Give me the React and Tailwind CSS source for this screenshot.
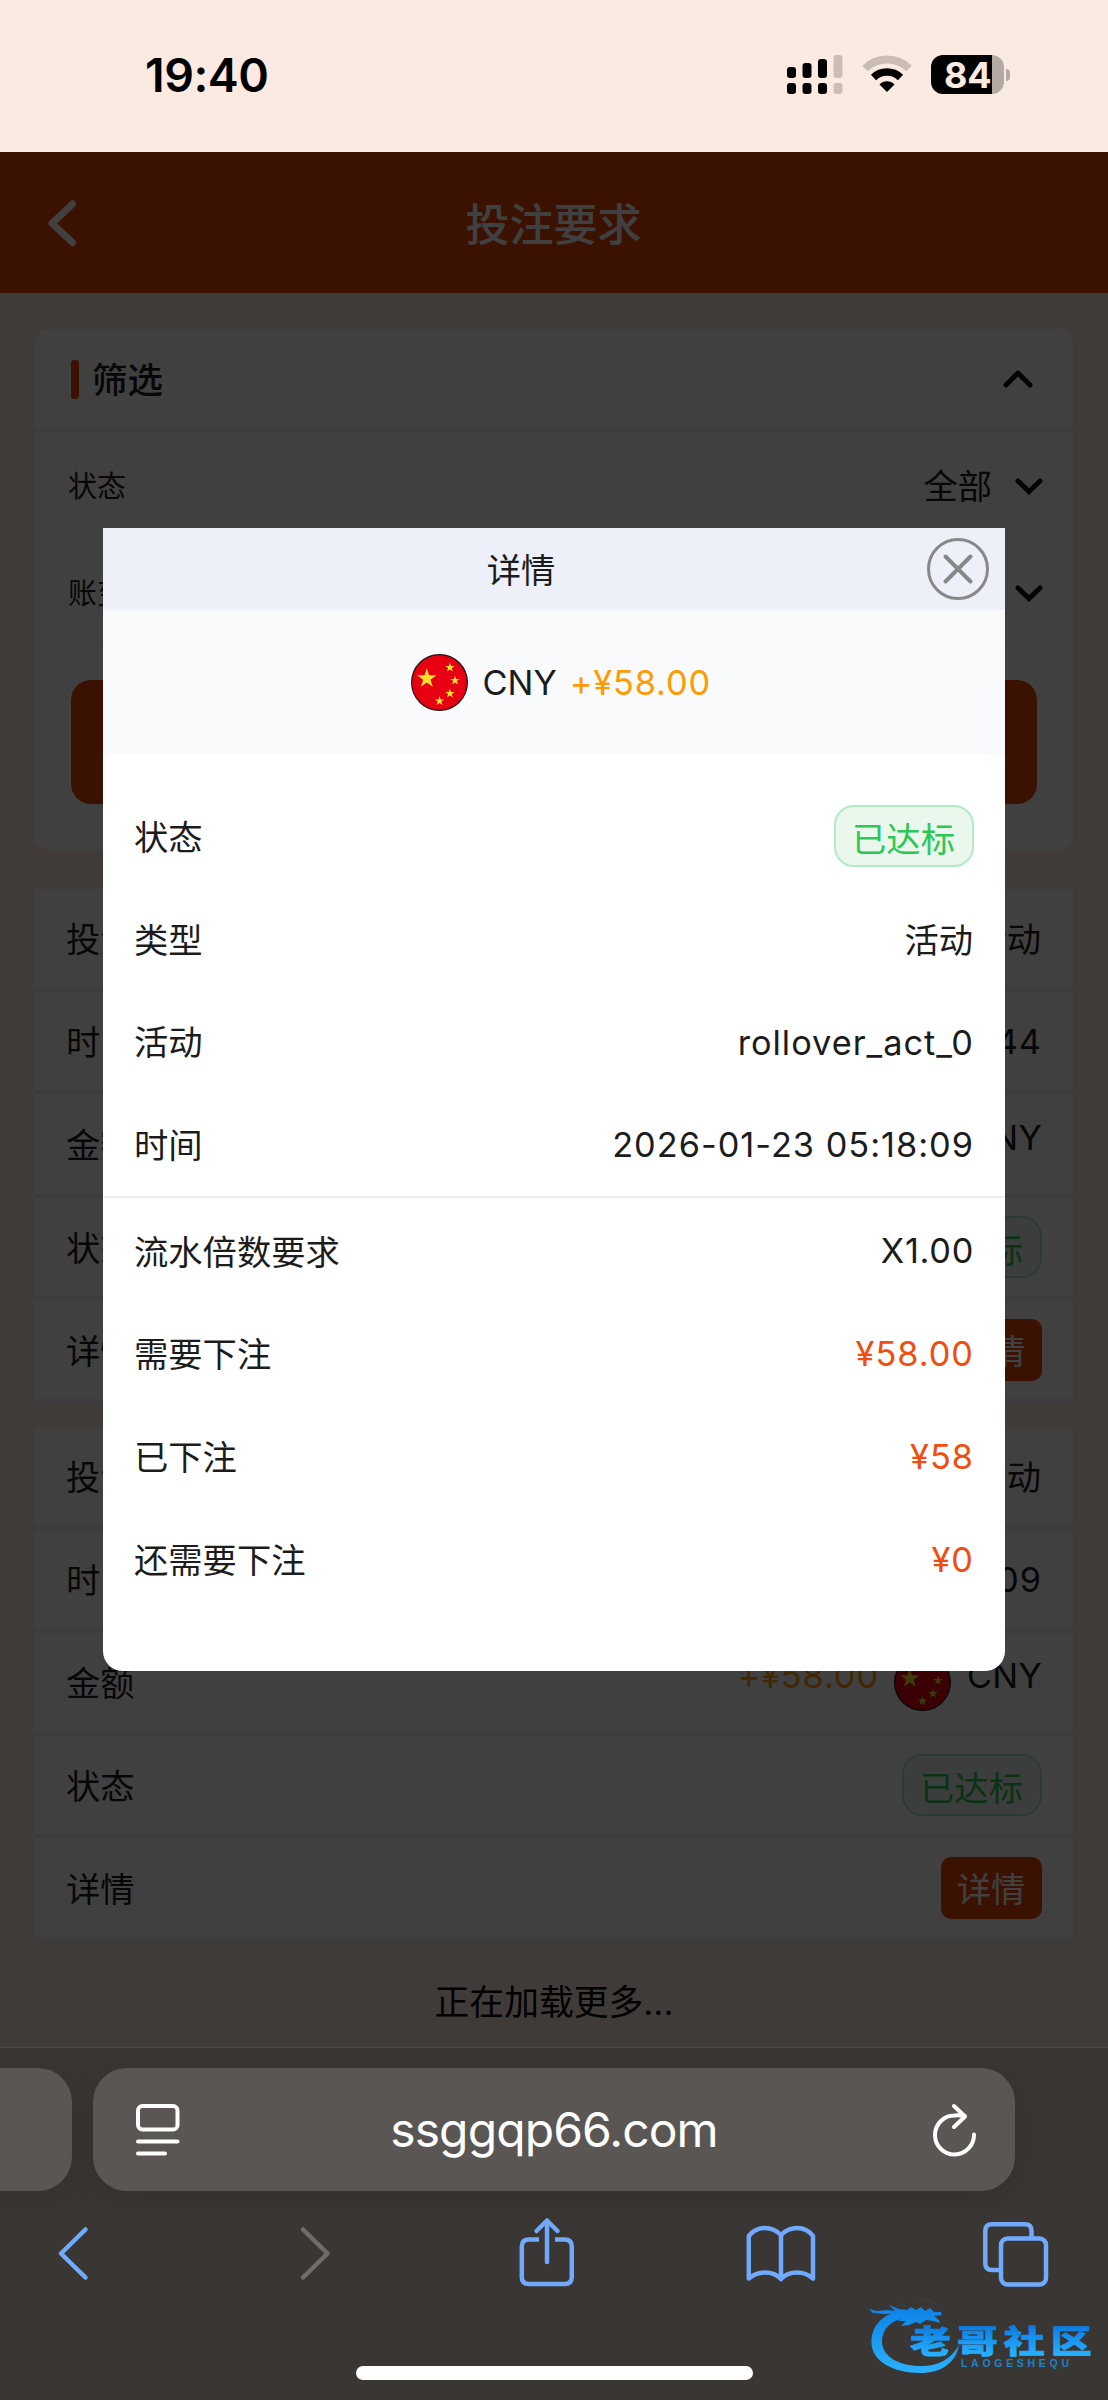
import clsx from "clsx";

const filters = [
  { label: "状态", value: "全部" },
  { label: "账变类型", value: "全部" },
];

const records = [
  { id: 1, type: "活动", time: "2026-01-23 05:20:44", amount: "+¥58.00" },
  { id: 2, type: "活动", time: "2026-01-23 05:18:09", amount: "+¥58.00" },
];

const infoRows = [
  { label: "状态", value: <StatusBadge /> },
  { label: "类型", value: "活动", className: "pt-[3px] pr-px" },
  { label: "活动", value: "rollover_act_0", className: "pt-[2px] tracking-[1px]" },
  { label: "时间", value: "2026-01-23 05:18:09", className: "pt-[2px] tracking-[1px]" },
];

const betRows = [
  { label: "流水倍数要求", value: "X1.00", className: "tracking-[0.7px]" },
  { label: "需要下注", value: "¥58.00", highlight: true },
  { label: "已下注", value: "¥58", highlight: true },
  { label: "还需要下注", value: "¥0", highlight: true },
];

function Star({ cx, cy, r }) {
  return (
    <path
      transform={`translate(${cx} ${cy}) scale(${r})`}
      d="M0-1 .225-.309.951-.309.363.118.588.809 0 .382-.588.809-.363.118-.951-.309-.225-.309Z"
      fill="#ffe12d"
    />
  );
}

function Flag() {
  return (
    <svg width="57" height="57" viewBox="0 0 57 57" className="shrink-0">
      <circle cx="28.5" cy="28.5" r="27.9" fill="#e60012" stroke="#231815" strokeWidth="1.2" />
      <Star cx={15.8} cy={24.5} r={10.2} />
      <Star cx={38.9} cy={13.5} r={5} />
      <Star cx={44} cy={26.5} r={5} />
      <Star cx={38.9} cy={39.5} r={5} />
      <Star cx={28.5} cy={47} r={5} />
    </svg>
  );
}

function StatusBadge() {
  return (
    <span className="flex h-[62px] w-[140px] items-center justify-center rounded-[20px] border-2 border-[#b0ebc1] bg-[#e9f7ed] pt-[8px] pr-px text-[#2dc755]">
      已达标
    </span>
  );
}

function Chevron({ up }) {
  return (
    <svg
      width="30"
      height="20"
      viewBox="0 0 30 20"
      fill="none"
      stroke="#111"
      strokeWidth="5"
      strokeLinecap="round"
      strokeLinejoin={up ? "round" : "miter"}
    >
      <path d={up ? "M3 16 15 4 27 16" : "M4 4 15 14.5 26 4"} />
    </svg>
  );
}

function StatusBar() {
  return (
    <div className="flex h-[152px] items-start bg-[#fbeae1] pl-[145px]">
      <span className="mt-[45px] w-[641px] text-[46.5px] leading-[60px] font-semibold tracking-[-0.5px]">
        19:40
      </span>
      <svg width="57" height="40" viewBox="0 0 57 40" className="mt-[55px] shrink-0">
        <rect x="1" y="12" width="9" height="11" rx="3" />
        <rect x="16.500" y="8" width="9" height="15" rx="3" />
        <rect x="32" y="4" width="9" height="19" rx="3" />
        <rect x="47.500" y="0" width="9" height="23" rx="3" fill="#cabdb6" />
        <rect x="1" y="28" width="9" height="11" rx="3" />
        <rect x="16.500" y="28" width="9" height="11" rx="3" />
        <rect x="32" y="28" width="9" height="11" rx="3" />
        <rect x="47.500" y="28" width="9" height="11" rx="3" fill="#cabdb6" />
      </svg>
      <svg width="50" height="37" viewBox="0 0 50 37" className="mt-[55px] ml-[19px] shrink-0" fill="none">
        <path d="M3 13.500A31.500 31.500 0 0 1 47 13.500" stroke="#cabdb6" strokeWidth="8" />
        <path d="M11.500 22.500A19.500 19.500 0 0 1 38.500 22.500" stroke="#000" strokeWidth="7.500" />
        <path d="M17.500 29.500A10.500 10.500 0 0 1 32.500 29.500L25 37Z" fill="#000" />
      </svg>
      <div className="mt-[55px] ml-[19px] flex items-center">
        <div className="flex h-[39px] w-[73px] items-center rounded-[12px] bg-linear-to-r from-black from-83% to-[#b5a9a3] to-83% pl-[13px]">
          <span className="text-[36px] leading-none font-bold tracking-[-0.3px] text-[#fbeae1]">84</span>
        </div>
        <div className="ml-[2px] h-[12px] w-[4px] rounded-r-full bg-[#b5a9a3]" />
      </div>
    </div>
  );
}

function FilterCard() {
  return (
    <section className="mt-[36px] h-[521px] rounded-[14px] bg-white">
      <div className="flex h-[103px] items-center border-b-3 border-[#eeeff4] pr-[40px] pl-[36px]">
        <span className="h-[39px] w-[8px] rounded-[3px] bg-[#ea4a08]" />
        <h2 className="ml-[13px] flex-1 pt-[4px] text-[35.5px] font-medium">筛选</h2>
        <Chevron up />
      </div>
      {filters.map((item) => (
        <div
          key={item.label}
          className="mx-[2px] flex h-[106.5px] items-center border-b-2 border-[#fcfcfd] pt-[6px] pr-[27px] pl-[31px]"
        >
          <span className="flex-1 text-[29px]">{item.label}</span>
          <span>{item.value}</span>
          <span className="ml-[22px]">
            <Chevron />
          </span>
        </div>
      ))}
      <button className="mx-[36px] mt-[35px] block h-[124px] w-[966px] rounded-[20px] bg-[#ea4a08] text-white">
        搜索
      </button>
    </section>
  );
}

function RecordCard({ record }) {
  const rows = [
    { label: "投注类型", value: <span className="pt-[3px] pr-px">{record.type}</span> },
    { label: "时间", value: <span className="pt-[2px] tracking-[1px]">{record.time}</span> },
    {
      label: "金额",
      value: (
        <div className="flex items-center">
          <span className="mr-[15px] pb-[13px] tracking-[0.9px] text-[#ff9a00]">{record.amount}</span>
          <Flag />
          <span className="ml-[16px] pb-[13px] tracking-[0.3px]">CNY</span>
        </div>
      ),
    },
    { label: "状态", value: <StatusBadge /> },
    {
      label: "详情",
      value: (
        <button className="flex h-[62px] w-[101px] items-center justify-center rounded-[10px] bg-[#ea4a08] pt-[3px] pr-px text-white">
          详情
        </button>
      ),
    },
  ];

  return (
    <section className="bg-white">
      {rows.map((row) => (
        <div
          key={row.label}
          className="flex h-[103px] items-center justify-between border-b-5 border-[#eeeff5] px-[31px]"
        >
          <span className="pt-[3px]">{row.label}</span>
          {row.value}
        </div>
      ))}
    </section>
  );
}

function DetailRow({ row }) {
  return (
    <div className="flex h-[102.7px] items-center justify-between px-[31px]">
      <span className="pt-[3px]">{row.label}</span>
      <span className={clsx(row.highlight && "pt-px tracking-[1px] text-[#f04d0e]", row.className)}>
        {row.value}
      </span>
    </div>
  );
}

function DetailModal() {
  return (
    <div className="h-[1143px] w-[902px] overflow-hidden rounded-b-[20px] bg-white">
      <div className="flex h-[82px] items-center bg-[#eef0f9] pr-[16px]">
        <h3 className="flex-1 pt-[3px] pl-[12px] text-center">详情</h3>
        <svg width="62" height="62" viewBox="0 0 62 62" fill="none" stroke="#888" strokeLinecap="round">
          <circle cx="31" cy="31" r="29.500" strokeWidth="3" />
          <path d="M18.500 18.500 43.500 43.500M43.500 18.500 18.500 43.500" strokeWidth="4" />
        </svg>
      </div>
      <div className="flex h-[145px] items-center bg-[#f9fafc] pl-[307.5px]">
        <Flag />
        <span className="ml-[15px]">CNY</span>
        <span className="ml-[13px] tracking-[0.9px] text-[#ff9a00]">+¥58.00</span>
      </div>
      <div className="border-b-2 border-[#ecf0f5] pt-[30px]">
        {infoRows.map((row) => (
          <DetailRow key={row.label} row={row} />
        ))}
      </div>
      <div className="pt-[2px]">
        {betRows.map((row) => (
          <DetailRow key={row.label} row={row} />
        ))}
      </div>
    </div>
  );
}

function Watermark() {
  return (
    <svg
      width="258"
      height="100"
      viewBox="0 0 258 100"
      className="absolute top-[2290px] left-[850px]"
      aria-label="老哥社区"
    >
      <defs>
        <linearGradient id="wm-ring" x1="0" y1="12" x2="0" y2="84" gradientUnits="userSpaceOnUse">
          <stop offset="0" stopColor="#0a7fe6" />
          <stop offset="1" stopColor="#2bb2fb" />
        </linearGradient>
        <linearGradient id="wm-text" x1="0" y1="0" x2="0" y2="1">
          <stop offset="0.2" stopColor="#0b7ce0" />
          <stop offset="0.85" stopColor="#27b2ff" />
        </linearGradient>
      </defs>
      <g fill="url(#wm-ring)">
        <path d="M50 21C30 25 21 38 21.500 53 22 71 43 83 70 83 91 83 106 73 109 55 101 69 89 76 71 76 48 76 32 66 32 51 32 40 40 31 54 28Z" />
        <path d="M19 19 27 21 38 20 45 21 39 15 49 19 57 20 61 17 66 20 71 17 75 21 80 18 84 22 91 22 92 25 84 26 89 30 90 33 83 31 76 30 70 34 66 32 59 35 51 36 56 31 48 31 52 27 43 28 47 24 34 24 23 23Z" />
      </g>
      <path d="M48 11Q52 17 62 17M66 9Q82 9 91 18" stroke="#31485a" strokeWidth="0.8" fill="none" />
      <text
        transform="translate(60 63) scale(1 0.77)"
        fontFamily="Noto Sans CJK SC, sans-serif"
        fontWeight="900"
        fontSize="41"
        letterSpacing="5.9"
        fill="url(#wm-text)"
        stroke="url(#wm-text)"
        strokeWidth="0.8"
      >
        老哥社区
      </text>
      <text
        x="111"
        y="76.5"
        fontFamily="Liberation Sans, sans-serif"
        fontSize="10.5"
        fontWeight="700"
        letterSpacing="3.7"
        fill="#1c84c8"
      >
        LAOGESHEQU
      </text>
    </svg>
  );
}

function BrowserBar() {
  return (
    <footer className="relative h-[353px] overflow-hidden border-t border-[#4a4947] bg-[#393634]">
      <div className="mt-[20px] flex gap-[21px]">
        <div className="h-[123px] w-[72px] rounded-r-[34px] bg-[#5a5654] shadow-[0_6px_30px_rgba(0,0,0,0.12)]" />
        <div className="flex h-[123px] w-[922px] items-center rounded-[34px] bg-[#5a5654] pr-[38px] pl-[43px] shadow-[0_6px_30px_rgba(0,0,0,0.12)]">
          <svg width="44" height="52" viewBox="0 0 44 52" fill="none" stroke="#fff" strokeWidth="4" strokeLinecap="round">
            <rect x="2" y="2" width="39.500" height="23.500" rx="4.500" />
            <path d="M2 37.500H41.500M2 49.500H29" />
          </svg>
          <span className="flex-1 pr-[5px] text-center text-[48px] leading-[60px] tracking-[-0.9px] text-white">
            ssggqp66.com
          </span>
          <svg width="44" height="54" viewBox="0 0 44 54" fill="none" stroke="#fff" strokeWidth="4" strokeLinecap="round" strokeLinejoin="round">
            <path d="M41 31.500A19.500 19.500 0 1 1 21.500 12.500Q26 12 31.500 13" />
            <path d="M21 3 32 13.500 21 24" />
          </svg>
        </div>
      </div>
      <div className="mt-[25px] flex h-[72px] items-center">
        <svg width="1108" height="72" viewBox="0 0 1108 72" fill="none" stroke="#71aafd" strokeWidth="4.500" strokeLinecap="round" strokeLinejoin="round">
          <path d="M85.500 13.500 61 37.500 85.500 61.500" />
          <path d="M303 13.500 327.500 37.500 303 61.500" stroke="#6f6d6b" />
          <path d="M539 23.500H529Q521.800 23.500 521.800 30.500V61Q521.800 68 529 68H564.500Q571.800 68 571.800 61V30.500Q571.800 23.500 564.500 23.500H555" strokeLinecap="butt" />
          <path d="M547 46V5M536.500 15 547 4.500 557.500 15" />
          <path d="M781 63V19Q774 12 765 12 755 12 748.800 20V62.500Q756 56.500 765 56.500 775 56.500 781 63 787 56.500 797 56.500 806 56.500 813 62.500V20Q807 12 797 12 788 12 781 19" />
          <rect x="1001" y="22.500" width="45" height="46" rx="6.500" />
          <path d="M1000 54H992Q985.300 54 985.300 47.500V15Q985.300 8.300 992 8.300H1025Q1031.500 8.300 1031.500 15V21.500" strokeLinecap="butt" />
        </svg>
      </div>
      <div className="mx-auto mt-[77.5px] h-[14px] w-[397px] rounded-full bg-white" />
    </footer>
  );
}

export default function App() {
  return (
    <div className="relative h-[2400px] w-[1108px] overflow-hidden font-['Inter','Noto_Sans_CJK_SC',sans-serif] text-black">
      <StatusBar />
      <div className="relative h-[1895px] bg-[#ffece0] text-[34.3px] leading-[48px] text-[#1c1c1c]">
        <header className="flex h-[141px] items-center bg-[#ea4a08] pr-[48px] pl-[46px] text-white">
          <svg width="32" height="48" viewBox="0 0 32 48" fill="none" stroke="#fff" strokeWidth="7" strokeLinecap="round" strokeLinejoin="round">
            <path d="M26.500 5 6 24.500 26.500 43.500" />
          </svg>
          <h1 className="flex-1 pt-[4px] pr-[31px] text-center text-[44px] font-medium">投注要求</h1>
        </header>
        <main className="px-[35px]">
          <FilterCard />
          <div className="mt-[39px] flex flex-col gap-[23px]">
            {records.map((record) => (
              <RecordCard key={record.id} record={record} />
            ))}
          </div>
          <p className="mt-[36px] text-center text-[34.8px] text-black">正在加载更多...</p>
        </main>
        <div className="absolute inset-0 flex items-center justify-center bg-black/75">
          <DetailModal />
        </div>
      </div>
      <BrowserBar />
      <Watermark />
    </div>
  );
}
